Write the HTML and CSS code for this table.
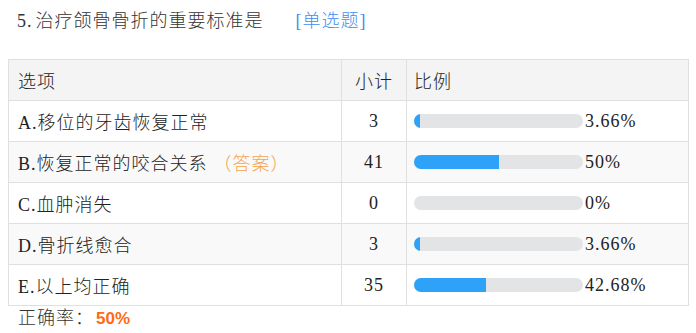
FILE: index.html
```html
<!DOCTYPE html>
<html lang="zh-CN">
<head>
<meta charset="utf-8">
<link rel="stylesheet" href="styles.css">
</head>
<body>
<div class="title"><span class="qnum">5.</span>治疗颌骨骨折的重要标准是<span class="qtype">[单选题]</span></div>
<table class="stats">
  <thead>
    <tr><th class="c-opt">选项</th><th class="c-cnt">小计</th><th class="c-pct">比例</th></tr>
  </thead>
  <tbody>
    <tr><td class="c-opt">A.移位的牙齿恢复正常</td><td class="c-cnt">3</td><td class="c-pct"><div class="bar-wrap"><div class="bar"><div class="fill" style="width:3.66%"></div></div><span class="pct">3.66%</span></div></td></tr>
    <tr class="alt"><td class="c-opt">B.恢复正常的咬合关系<span class="answer">（答案）</span></td><td class="c-cnt">41</td><td class="c-pct"><div class="bar-wrap"><div class="bar"><div class="fill" style="width:50%"></div></div><span class="pct">50%</span></div></td></tr>
    <tr><td class="c-opt">C.血肿消失</td><td class="c-cnt">0</td><td class="c-pct"><div class="bar-wrap"><div class="bar"><div class="fill" style="width:0%"></div></div><span class="pct">0%</span></div></td></tr>
    <tr class="alt"><td class="c-opt">D.骨折线愈合</td><td class="c-cnt">3</td><td class="c-pct"><div class="bar-wrap"><div class="bar"><div class="fill" style="width:3.66%"></div></div><span class="pct">3.66%</span></div></td></tr>
    <tr><td class="c-opt">E.以上均正确</td><td class="c-cnt">35</td><td class="c-pct"><div class="bar-wrap"><div class="bar"><div class="fill" style="width:42.68%"></div></div><span class="pct">42.68%</span></div></td></tr>
  </tbody>
</table>
<div class="rate">正确率：<span class="rate-val">50%</span></div>
</body>
</html>
```
FILE: styles.css
```css
html, body {
  margin: 0;
  padding: 0;
  background: #fff;
}
body {
  margin: 8px 7px 8px 8px;
  font-family: "Liberation Serif", "Noto Sans CJK SC", serif;
  font-size: 18px;
  font-weight: 300;
  letter-spacing: 1px;
  color: #333;
}
.title {
  line-height: 26px;
  padding-left: 9px;
  margin-bottom: 25px;
  color: #333;
}
.qnum {
  margin-right: 3px;
}
.qtype {
  margin-left: 32px;
  color: #3d8ef0;
}
.stats {
  width: 681px;
  border-collapse: collapse;
  table-layout: fixed;
}
.stats th, .stats td {
  border: 1px solid #e0e0e0;
  height: 40px;
  padding: 0;
  font-weight: 300;
  text-align: left;
  vertical-align: middle;
  color: #222;
}
.stats thead tr {
  background: #f4f4f4;
}
.stats tr.alt {
  background: #f9f9f9;
}
.c-opt {
  width: 333px;
  padding-left: 9px !important;
  box-sizing: border-box;
}
.c-cnt {
  width: 64px;
  text-align: center !important;
}
.c-pct {
  padding-left: 7px !important;
}
.answer {
  margin-left: 6px;
  color: #f5a54e;
}
.bar-wrap {
  display: flex;
  align-items: center;
  gap: 2px;
}
.bar {
  width: 169px;
  height: 14px;
  border-radius: 7px;
  background: #e3e4e6;
  overflow: hidden;
  flex: none;
}
.fill {
  height: 100%;
  background: #2ea2f8;
}
.pct {
  color: #222;
}
.rate {
  line-height: 24px;
  padding-left: 10px;
  color: #333;
}
.rate-val {
  margin-left: 2px;
  font-family: "Liberation Sans", sans-serif;
  font-weight: bold;
  font-size: 17px;
  letter-spacing: 0;
  color: #ff6a13;
}
```
